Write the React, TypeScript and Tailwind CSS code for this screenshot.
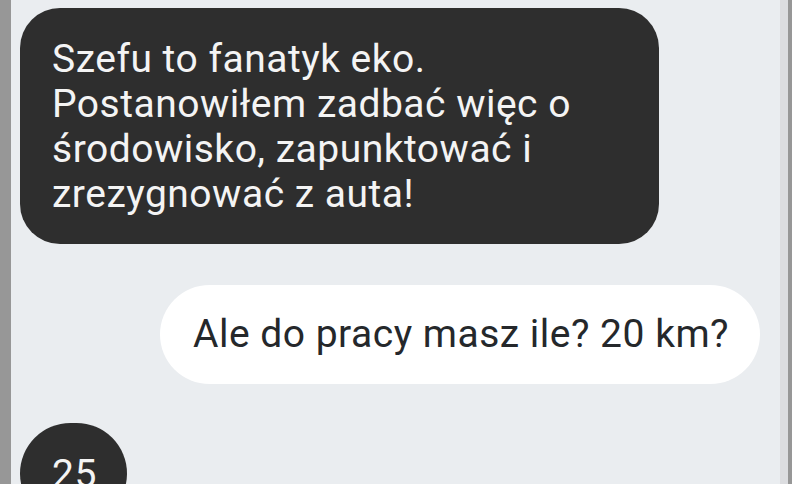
import React from "react";

export default function App() {
  const font = { fontFamily: "Roboto, 'Noto Sans', sans-serif" };
  return (
    <div className="flex h-[484px] w-[792px] overflow-hidden bg-[#eaedf0]" style={font}>
      <div className="w-[11px] shrink-0 bg-[#979797]" />
      <div className="flex flex-1 flex-col pl-[9px] pr-[20px] pt-[8px]">
        <div className="w-[639px] rounded-[40px] bg-[#2e2e2e] pl-[32px] pr-[20px] pt-[29px] pb-[27px] text-[39px] leading-[45px] tracking-[0.5px] text-[#f4f4f4]">
          Szefu to fanatyk eko.
          <br />
          Postanowiłem zadbać więc o
          <br />
          środowisko, zapunktować i
          <br />
          zrezygnować z auta!
        </div>
        <div className="mt-[41px] flex justify-end">
          <div className="flex h-[99px] w-[600px] items-center rounded-[50px] bg-white pl-[33px] text-[39px] tracking-[0.5px] text-[#25282b]">
            Ale do pracy masz ile? 20 km?
          </div>
        </div>
        <div className="mt-[39px] flex">
          <div className="w-[107px] rounded-[53px] bg-[#2e2e2e] pl-[32px] pt-[29px] pb-[27px] text-[39px] leading-[45px] tracking-[0.5px] text-[#f4f4f4]">
            25
          </div>
        </div>
      </div>
      <div className="w-[8px] shrink-0 bg-[#dcdde0]" />
      <div className="w-[4px] shrink-0 bg-[#979797]" />
    </div>
  );
}
